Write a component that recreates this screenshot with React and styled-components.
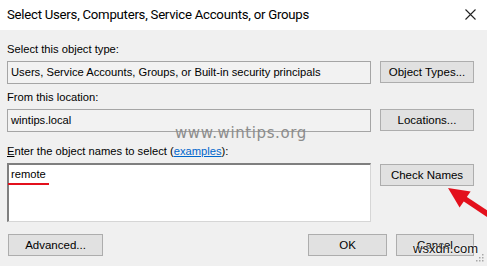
import React from 'react'
import styled, { createGlobalStyle } from 'styled-components'

const GlobalStyle = createGlobalStyle`
  html, body {
    margin: 0;
    padding: 0;
    background: #f0f0f0;
  }
`;

const Dialog = styled.div`
  position: relative;
  width: 487px;
  height: 266px;
  overflow: hidden;
  background: #f0f0f0;
  font-family: "Liberation Sans", Arial, sans-serif;
  font-size: 11.2px;
  color: #000;
`;

const TitleBar = styled.div`
  display: flex;
  align-items: center;
  justify-content: space-between;
  height: 30px;
  padding: 0 11px 1px 7px;
  box-sizing: border-box;
  background: #fff;
  font-family: Roboto, "Noto Sans", sans-serif;
  font-size: 13.2px;
  letter-spacing: -0.25px;
  color: #000;
`;

const CloseIcon = () => (
  <svg width="11" height="11" viewBox="0 0 11 11">
    <path d="M0.5 0.5 L10.5 10.5 M10.5 0.5 L0.5 10.5" stroke="#222" strokeWidth="1.1" />
  </svg>
);

const Body = styled.div`
  display: flex;
  flex-direction: column;
  padding: 12px 13px 0 7px;
`;

const Label = styled.div`
  height: 14px;
  line-height: 14px;
  margin-top: ${p => p.$top || 0}px;
  margin-bottom: 5px;
`;

const AccessKey = styled.span`
  text-decoration: underline;
`;

const Link = styled.a`
  color: #0066cc;
  text-decoration: underline;
  cursor: pointer;
`;

const Row = styled.div`
  display: flex;
  align-items: flex-start;
  gap: 9px;
`;

const Field = styled.div`
  box-sizing: border-box;
  width: 364px;
  height: 23px;
  padding: 0 3px;
  line-height: 21px;
  border: 1px solid #a5a5a5;
  background: #f2f2f2;
  white-space: nowrap;
  overflow: hidden;
`;

const NamesBox = styled.div`
  position: relative;
  box-sizing: border-box;
  width: 364px;
  height: 59px;
  padding: 2px 2px;
  line-height: 14px;
  background: #fff;
  border-top: 2px solid #7f7f7f;
  border-left: 2px solid #7f7f7f;
  border-right: 1px solid #d6d6d6;
  border-bottom: 1px solid #d6d6d6;
`;

const Button = styled.div`
  box-sizing: border-box;
  display: flex;
  align-items: center;
  justify-content: center;
  width: ${p => p.$w || 94}px;
  height: 22px;
  margin-top: ${p => p.$top || 0}px;
  border: 1px solid #adadad;
  background: #e1e1e1;
  font-size: 11.5px;
`;

const Footer = styled.div`
  display: flex;
  align-items: center;
  margin-top: 12px;
  padding-left: 1px;
`;

const Spacer = styled.div`
  flex: 1;
`;

const FooterButtons = styled.div`
  display: flex;
  gap: 9px;
`;

const RedUnderline = styled.div`
  position: absolute;
  left: -1px;
  top: 18px;
  width: 41px;
  height: 2px;
  background: #e3101c;
`;

const Watermark = styled.div`
  position: absolute;
  left: 175px;
  top: 124px;
  font-family: "DejaVu Sans", sans-serif;
  font-size: 15px;
  letter-spacing: 0.6px;
  color: #8c8c8c;
  line-height: 18px;
  pointer-events: none;
`;

const SiteMark = styled.div`
  position: absolute;
  left: 413px;
  top: 241px;
  font-family: "Liberation Sans", Arial, sans-serif;
  font-size: 13px;
  line-height: 16px;
  color: #111;
  text-shadow: 0 0 2px #fff, 0 0 2px #fff;
  pointer-events: none;
`;

const ArrowWrap = styled.svg`
  position: absolute;
  left: 440px;
  top: 180px;
`;

const GripWrap = styled.svg`
  position: absolute;
  right: 3px;
  bottom: 4px;
`;

const Arrow = () => (
  <ArrowWrap width="47" height="50" viewBox="0 0 47 50">
    <line x1="22" y1="17" x2="52" y2="37" stroke="#e3101c" strokeWidth="5.5" />
    <polygon points="8,8 19.6,27.6 30.6,11.6" fill="#e3101c" />
  </ArrowWrap>
);

const Grip = () => (
  <GripWrap width="9" height="9" viewBox="0 0 9 9">
    {[[7, 1], [4, 4], [7, 4], [1, 7], [4, 7], [7, 7]].map(([x, y]) => (
      <rect key={`${x}-${y}`} x={x} y={y} width="1.5" height="1.5" fill="#a8a8a8" />
    ))}
  </GripWrap>
);

export default function App() {
  return (
    <Dialog>
      <GlobalStyle />
      <TitleBar>
        <span>Select Users, Computers, Service Accounts, or Groups</span>
        <CloseIcon />
      </TitleBar>
      <Body>
        <Label>Select this object type:</Label>
        <Row>
          <Field>Users, Service Accounts, Groups, or Built-in security principals</Field>
          <Button>Object Types...</Button>
        </Row>
        <Label $top={6}>From this location:</Label>
        <Row>
          <Field>wintips.local</Field>
          <Button>Locations...</Button>
        </Row>
        <Label $top={12}>
          <AccessKey>E</AccessKey>nter the object names to select (<Link>examples</Link>):
        </Label>
        <Row>
          <NamesBox>
            remote
            <RedUnderline />
          </NamesBox>
          <Button $top={1}>Check Names</Button>
        </Row>
        <Footer>
          <Button $w={95}>Advanced...</Button>
          <Spacer />
          <FooterButtons>
            <Button $w={79}>OK</Button>
            <Button $w={78}>Cancel</Button>
          </FooterButtons>
        </Footer>
      </Body>
      <Watermark>www.wintips.org</Watermark>
      <SiteMark>wsxdn.com</SiteMark>
      <Arrow />
      <Grip />
    </Dialog>
  );
}
